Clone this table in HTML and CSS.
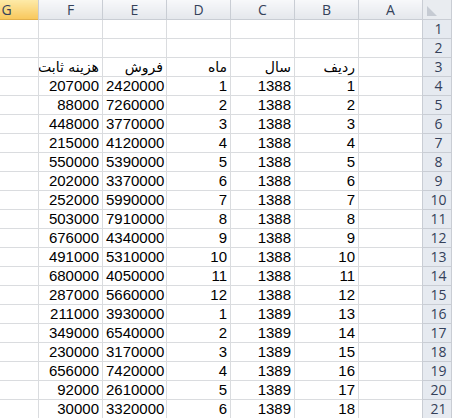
FILE: index.html
```html
<!DOCTYPE html>
<html lang="fa" dir="rtl">
<head>
<meta charset="utf-8">
<title>Sheet</title>
<link rel="stylesheet" href="styles.css">
</head>
<body>
<div class="frame">
<table class="sheet">
<colgroup><col class="c-rh"><col class="c"><col class="c"><col class="c"><col class="c"><col class="c"><col class="c"><col class="c"></colgroup>
<thead>
<tr class="hr"><th class="corner"><span class="tri"></span></th><th class="ch">A</th><th class="ch">B</th><th class="ch">C</th><th class="ch">D</th><th class="ch">E</th><th class="ch">F</th><th class="ch sel">G</th></tr>
</thead>
<tbody>
<tr><th class="rh">1</th><td></td><td></td><td></td><td></td><td></td><td></td><td></td></tr>
<tr><th class="rh">2</th><td></td><td></td><td></td><td></td><td></td><td></td><td></td></tr>
<tr><th class="rh">3</th><td></td><td class="t">ردیف</td><td class="t">سال</td><td class="t">ماه</td><td class="t">فروش</td><td class="t">هزینه ثابت</td><td></td></tr>
<tr><th class="rh">4</th><td></td><td>1</td><td>1388</td><td>1</td><td>2420000</td><td>207000</td><td></td></tr>
<tr><th class="rh">5</th><td></td><td>2</td><td>1388</td><td>2</td><td>7260000</td><td>88000</td><td></td></tr>
<tr><th class="rh">6</th><td></td><td>3</td><td>1388</td><td>3</td><td>3770000</td><td>448000</td><td></td></tr>
<tr><th class="rh">7</th><td></td><td>4</td><td>1388</td><td>4</td><td>4120000</td><td>215000</td><td></td></tr>
<tr><th class="rh">8</th><td></td><td>5</td><td>1388</td><td>5</td><td>5390000</td><td>550000</td><td></td></tr>
<tr><th class="rh">9</th><td></td><td>6</td><td>1388</td><td>6</td><td>3370000</td><td>202000</td><td></td></tr>
<tr><th class="rh">10</th><td></td><td>7</td><td>1388</td><td>7</td><td>5990000</td><td>252000</td><td></td></tr>
<tr><th class="rh">11</th><td></td><td>8</td><td>1388</td><td>8</td><td>7910000</td><td>503000</td><td></td></tr>
<tr><th class="rh">12</th><td></td><td>9</td><td>1388</td><td>9</td><td>4340000</td><td>676000</td><td></td></tr>
<tr><th class="rh">13</th><td></td><td>10</td><td>1388</td><td>10</td><td>5310000</td><td>491000</td><td></td></tr>
<tr><th class="rh">14</th><td></td><td>11</td><td>1388</td><td>11</td><td>4050000</td><td>680000</td><td></td></tr>
<tr><th class="rh">15</th><td></td><td>12</td><td>1388</td><td>12</td><td>5660000</td><td>287000</td><td></td></tr>
<tr><th class="rh">16</th><td></td><td>13</td><td>1389</td><td>1</td><td>3930000</td><td>211000</td><td></td></tr>
<tr><th class="rh">17</th><td></td><td>14</td><td>1389</td><td>2</td><td>6540000</td><td>349000</td><td></td></tr>
<tr><th class="rh">18</th><td></td><td>15</td><td>1389</td><td>3</td><td>3170000</td><td>230000</td><td></td></tr>
<tr><th class="rh">19</th><td></td><td>16</td><td>1389</td><td>4</td><td>7420000</td><td>656000</td><td></td></tr>
<tr><th class="rh">20</th><td></td><td>17</td><td>1389</td><td>5</td><td>2610000</td><td>92000</td><td></td></tr>
<tr><th class="rh">21</th><td></td><td>18</td><td>1389</td><td>6</td><td>3320000</td><td>30000</td><td></td></tr>
</tbody>
</table>
</div>
</body>
</html>
```
FILE: styles.css
```css
html, body {
  margin: 0;
  padding: 0;
  background: #ffffff;
  overflow: hidden;
}
body {
  direction: rtl;
  width: 452px;
  height: 418px;
}
.frame {
  width: 452px;
  height: 418px;
  overflow: hidden;
}
.sheet {
  border-collapse: collapse;
  table-layout: fixed;
  width: 477px;
  font-family: "Liberation Sans", "DejaVu Sans", sans-serif;
  font-size: 15px;
  color: #000;
}
.c-rh { width: 29px; }
.c { width: 64px; }
.sheet tr { height: 19px; }
.sheet td {
  height: 18px;
  padding: 0 3px 0 3px;
  border: 1px solid #dadcdf;
  text-align: right;
  direction: ltr;
  line-height: 18px;
  white-space: nowrap;
  overflow: hidden;
}
.sheet td.t {
  direction: rtl;
  font-family: "DejaVu Sans", sans-serif;
  font-size: 14px;
}
.ch {
  height: 18px;
  padding: 0;
  font-weight: normal;
  font-family: "Open Sans", "Liberation Sans", sans-serif;
  font-size: 14px;
  color: #34415a;
  background: linear-gradient(#f7f8fa, #e4e7ec);
  border: 1px solid #c9cdd4;
  border-top: none;
  text-align: center;
}
.ch.sel {
  background: linear-gradient(#fdeaa8, #f8c85d);
  border-color: #e2b04c;
}
.corner {
  position: relative;
  padding: 0;
  background: #e9ecf0;
  border: 1px solid #c9cdd4;
  border-top: none;
}
.tri {
  position: absolute;
  left: 4px;
  bottom: 3px;
  width: 0;
  height: 0;
  border-style: solid;
  border-width: 10px 0 0 10px;
  border-color: transparent transparent transparent #c6cbd3;
}
.rh {
  padding: 0 0 0 3px;
  font-weight: normal;
  font-family: "Open Sans", "Liberation Sans", sans-serif;
  font-size: 14px;
  color: #34415a;
  background: #e6eaf0;
  border: 1px solid #c9cdd4;
  text-align: center;
  line-height: 18px;
}
```
